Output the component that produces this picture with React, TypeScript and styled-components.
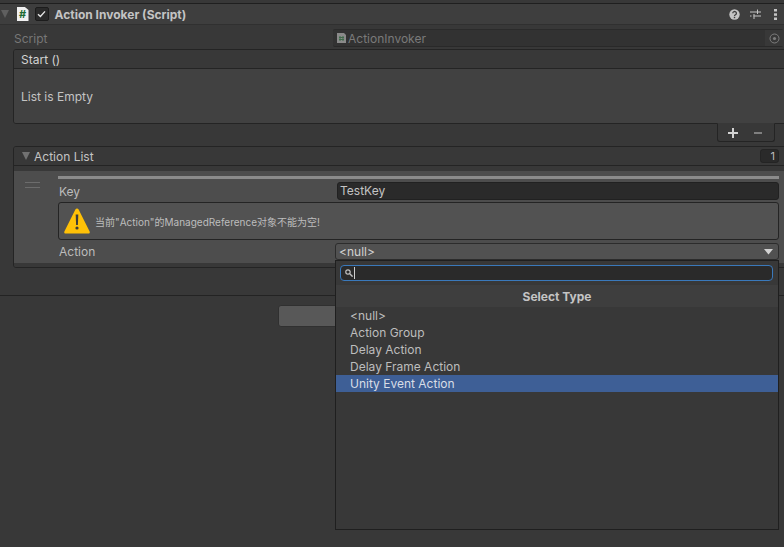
import * as React from 'react';
import styled, { createGlobalStyle } from 'styled-components';

const UI_FONT = '"Inter", "Noto Sans CJK SC", "Liberation Sans", sans-serif';

const GlobalStyle = createGlobalStyle`
  html, body {
    margin: 0;
    height: 100%;
    background: #383838;
    overflow: hidden;
  }

  #root {
    height: 100%;
  }
`;

const Page = styled.div`
  position: relative;
  width: 784px;
  height: 547px;
  padding-top: 3px;
  box-sizing: border-box;
  overflow: hidden;
  font-family: ${UI_FONT};
  font-size: 12px;
  color: #c4c4c4;
  background: #383838;
`;

const ComponentHeader = styled.div`
  display: flex;
  align-items: center;
  height: 20px;
  box-sizing: content-box;
  border-top: 1px solid #1f1f1f;
  border-bottom: 1px solid #303030;
  background: #3e3e3e;
  padding-left: 1px;
`;

const Title = styled.span`
  flex: 1;
  margin-left: 6px;
  font-weight: 700;
  color: #c4c4c4;
`;

const FoldArrow = styled.span<{ $shade: string }>`
  width: 0;
  height: 0;
  flex: none;
  border-left: 4.5px solid transparent;
  border-right: 4.5px solid transparent;
  border-top: 8px solid ${p => p.$shade};
`;

const ScriptIcon = styled.span`
  display: flex;
  align-items: center;
  justify-content: center;
  width: 12px;
  height: 14px;
  margin-left: 7.5px;
  background: #f1f1f1;
  clip-path: polygon(0 0, 70% 0, 100% 22%, 100% 100%, 0 100%);
  color: #1c6b33;
  font-size: 11px;
  font-weight: 700;
`;

const EnabledBox = styled.span`
  display: flex;
  align-items: center;
  justify-content: center;
  width: 14px;
  height: 14px;
  box-sizing: border-box;
  margin-left: 6px;
  border: 1px solid #1c1c1c;
  border-radius: 2px;
  background: #2a2a2a;
`;

const HeaderIcons = styled.div`
  display: flex;
  align-items: center;
  gap: 10px;
  margin-right: 7px;
`;

const ScriptRow = styled.div`
  display: flex;
  align-items: center;
  height: 18px;
  margin: 4px 1px 2px 14px;
  color: #777;
`;

const RowLabel = styled.span`
  width: 319px;
  flex: none;
`;

const ObjectField = styled.div`
  display: flex;
  align-items: center;
  flex: 1;
  height: 18px;
  box-sizing: border-box;
  padding-left: 4px;
  border-bottom: 1px solid #292929;
  border-top: 1px solid #2b2b2b;
  border-radius: 2px;
  background: #323232;
  color: #7a7a7a;
`;

const FieldName = styled.span`
  flex: 1;
  margin-left: 2px;
`;

const PickerButton = styled.span`
  display: flex;
  align-items: center;
  justify-content: center;
  width: 18px;
  align-self: stretch;
  background: #383838;
`;

const EventPanel = styled.section`
  margin: 0 -4px 0 13px;
`;

const EventBox = styled.div`
  border: 1px solid #242424;
  border-radius: 3px 3px 0 3px;
  overflow: hidden;
`;

const PanelHeader = styled.div`
  display: flex;
  align-items: center;
  height: 18px;
  padding-left: 7px;
  border-bottom: 1px solid #242424;
  background: #383838;
  color: #d2d2d2;
`;

const EventBody = styled.div`
  display: flex;
  align-items: center;
  height: 54px;
  padding-left: 7px;
  background: #414141;
`;

const Footer = styled.div`
  display: flex;
  align-items: center;
  gap: 16px;
  width: 58px;
  height: 19px;
  margin: -1px 13px 0 auto;
  padding-left: 10px;
  border: 1px solid #242424;
  border-top: 1px solid #383838;
  border-radius: 0 0 3px 3px;
  box-sizing: border-box;
  background: #383838;
`;

const ListPanel = styled.section`
  margin: 4px -4px 0 13px;
  border: 1px solid #242424;
  border-radius: 3px;
  overflow: hidden;
`;

const ListHeader = styled(PanelHeader)`
  padding-left: 8px;
  gap: 4px;
`;

const ListTitle = styled.span`
  flex: 1;
  color: #c4c4c4;
`;

const CountBadge = styled.span`
  width: 19px;
  height: 14px;
  margin-right: 8px;
  padding-right: 3px;
  box-sizing: border-box;
  border: 1px solid #242424;
  border-radius: 3px;
  background: #2a2a2a;
  color: #bdbdbd;
  font-size: 11px;
  line-height: 13px;
  text-align: right;
`;

const ListBody = styled.div`
  padding: 5px 0 4px;
  background: #383838;
`;

const ElementArea = styled.div`
  display: flex;
  height: 92px;
  padding: 5px 8px 0 0;
  box-sizing: border-box;
  background: #4d4d4d;
`;

const DragHandle = styled.div`
  width: 15px;
  height: 4px;
  flex: none;
  margin: 6px 18px 0 11px;
  border-top: 1px solid #6c6c6c;
  border-bottom: 1px solid #6c6c6c;
`;

const ElementColumn = styled.div`
  display: flex;
  flex-direction: column;
  flex: 1;
  min-width: 0;
`;

const ElementBar = styled.div`
  height: 3px;
  background: #8b8b8b;
`;

const FieldRow = styled.div`
  display: flex;
  align-items: center;
  height: 18px;
  margin-top: 3px;
  color: #bcbcbc;
`;

const FieldLabel = styled.span`
  width: 278px;
  margin-left: 1px;
  flex: none;
`;

const TextField = styled.div`
  flex: 1;
  height: 18px;
  box-sizing: border-box;
  padding-left: 2px;
  border: 1px solid #212121;
  border-radius: 3px;
  background: #2a2a2a;
  color: #c4c4c4;
  line-height: 16px;
`;

const HelpBox = styled.div`
  display: flex;
  align-items: center;
  height: 38px;
  box-sizing: border-box;
  margin-top: 2px;
  padding-left: 5px;
  border: 1px solid #242424;
  border-radius: 3px;
  background: #525252;
  font-size: 10px;
  color: #bdbdbd;
`;

const HelpText = styled.span`
  margin-left: 5px;
`;

const ActionRow = styled(FieldRow)`
  height: 17px;
`;

const ActionLabel = styled(FieldLabel)`
  width: 276px;
`;

const SelectField = styled.div`
  display: flex;
  align-items: center;
  justify-content: space-between;
  flex: 1;
  height: 17px;
  box-sizing: border-box;
  padding: 0 5px 0 3px;
  border: 1px solid #2c2c2c;
  border-radius: 3px;
  background: #515151;
  color: #d2d2d2;
`;

const Divider = styled.div`
  height: 1px;
  margin-top: 27px;
  background: #232323;
`;

const AddButton = styled.div`
  width: 230px;
  height: 22px;
  margin: 9px 0 0 278px;
  border: 1px solid #303030;
  border-radius: 3px;
  box-sizing: border-box;
  background: #585858;
`;

const Popup = styled.div`
  position: absolute;
  top: 260px;
  left: 335px;
  width: 444px;
  height: 270px;
  box-sizing: border-box;
  border: 1px solid #1f1f1f;
  background: #383838;
`;

const SearchBar = styled.div`
  height: 24px;
  padding: 4px 5px 0 4px;
  box-sizing: border-box;
  background: #383838;
`;

const SearchField = styled.div`
  display: flex;
  align-items: center;
  height: 16px;
  box-sizing: border-box;
  padding-left: 4px;
  border: 1px solid #3a79bb;
  border-radius: 4px;
  background: #2a2a2a;
`;

const Caret = styled.span`
  width: 1px;
  height: 12px;
  margin-left: 1px;
  background: #cfcfcf;
`;

const PopupTitle = styled.div`
  height: 22px;
  background: #3e3e3e;
  font-weight: 700;
  line-height: 23px;
  text-align: center;
  color: #c4c4c4;
`;

const TypeList = styled.div`
  display: flex;
  flex-direction: column;
`;

const TypeItem = styled.div<{ $active?: boolean }>`
  height: 17px;
  padding-left: 14px;
  line-height: 17px;
  color: ${p => (p.$active ? '#d8dde6' : '#bdbdbd')};
  background: ${p => (p.$active ? '#3e5f96' : 'transparent')};
`;

const HelpGlyph = () => (
  <svg width="11" height="11" viewBox="0 0 11 11">
    <circle cx="5.5" cy="5.5" r="5.2" fill="#c4c4c4" />
    <path d="M3.8 4.2a1.8 1.7 0 1 1 2.7 1.5c-.7.4-1 .7-1 1.3" fill="none" stroke="#3e3e3e" strokeWidth="1.3" />
    <rect x="4.8" y="7.8" width="1.4" height="1.4" fill="#3e3e3e" />
  </svg>
);

const PresetGlyph = () => (
  <svg width="11" height="10" viewBox="0 0 11 10">
    <path d="M0 3h11M7.5 0.5v4.5M0 7h1.5M3.5 7h7.5M4 5v5" stroke="#c4c4c4" strokeWidth="1" fill="none" />
  </svg>
);

const MoreGlyph = () => (
  <svg width="6" height="11" viewBox="-3 0 6 11">
    <rect x="0" y="0" width="3" height="2.5" fill="#c4c4c4" />
    <rect x="0" y="4.3" width="3" height="2.5" fill="#c4c4c4" />
    <rect x="0" y="8.5" width="3" height="2.5" fill="#c4c4c4" />
  </svg>
);

const CheckGlyph = () => (
  <svg width="9" height="8" viewBox="0 0 9 8">
    <path d="M1 4.2 3.4 6.4 8 1.4" fill="none" stroke="#e6e6e6" strokeWidth="1.4" />
  </svg>
);

const FileGlyph = () => (
  <svg width="9" height="10" viewBox="0 0 9 10">
    <path d="M0 0h7l2 2v8H0z" fill="#8a8a8a" />
    <path d="M3 3v5M6 3v5M2 4.5h5M2 6.5h5" stroke="#3f6b4a" strokeWidth="1" />
  </svg>
);

const TargetGlyph = () => (
  <svg width="11" height="11" viewBox="0 0 11 11">
    <circle cx="5.5" cy="5.5" r="4.5" fill="none" stroke="#7d7d7d" strokeWidth="1" />
    <circle cx="5.5" cy="5.5" r="1.6" fill="#7d7d7d" />
  </svg>
);

const PlusGlyph = () => (
  <svg width="10" height="10" viewBox="0 0 10 10">
    <path d="M5 0v10M0 5h10" stroke="#d2d2d2" strokeWidth="2" />
  </svg>
);

const MinusGlyph = () => (
  <svg width="8" height="2" viewBox="0 0 8 2">
    <rect width="8" height="2" fill="#7f7f7f" />
  </svg>
);

const WarningGlyph = () => (
  <svg width="26" height="26" viewBox="0 0 26 26">
    <path d="M13 0.5c.7 0 1.2.4 1.6 1l11 22c.5 1 0 2-1.2 2H1.6c-1.2 0-1.7-1-1.2-2l11-22c.4-.6.9-1 1.6-1z" fill="#ffc107" />
    <path d="M11.7 6.5h2.6l-.4 10.5h-1.8z" fill="#3a3a3a" />
    <circle cx="13" cy="20" r="1.6" fill="#3a3a3a" />
  </svg>
);

const SearchGlyph = () => (
  <svg width="8" height="8" viewBox="0 0 8 8">
    <circle cx="3" cy="3" r="2.2" fill="none" stroke="#c4c4c4" strokeWidth="1.2" />
    <path d="M4.8 4.8 7.6 7.6" stroke="#c4c4c4" strokeWidth="1.4" />
  </svg>
);

const DropGlyph = () => (
  <svg width="9" height="6" viewBox="0 0 9 6">
    <path d="M0 0h9L4.5 5.5z" fill="#d2d2d2" />
  </svg>
);

const typeNames = ['<null>', 'Action Group', 'Delay Action', 'Delay Frame Action', 'Unity Event Action'];

export default function App() {
  return (
    <Page>
      <GlobalStyle />
      <ComponentHeader>
        <FoldArrow $shade="#5f5f5f" />
        <ScriptIcon>#</ScriptIcon>
        <EnabledBox>
          <CheckGlyph />
        </EnabledBox>
        <Title>Action Invoker (Script)</Title>
        <HeaderIcons>
          <HelpGlyph />
          <PresetGlyph />
          <MoreGlyph />
        </HeaderIcons>
      </ComponentHeader>

      <ScriptRow>
        <RowLabel>Script</RowLabel>
        <ObjectField>
          <FileGlyph />
          <FieldName>ActionInvoker</FieldName>
          <PickerButton>
            <TargetGlyph />
          </PickerButton>
        </ObjectField>
      </ScriptRow>

      <EventPanel>
        <EventBox>
          <PanelHeader>Start ()</PanelHeader>
          <EventBody>List is Empty</EventBody>
        </EventBox>
        <Footer>
          <PlusGlyph />
          <MinusGlyph />
        </Footer>
      </EventPanel>

      <ListPanel>
        <ListHeader>
          <FoldArrow $shade="#727272" />
          <ListTitle>Action List</ListTitle>
          <CountBadge>1</CountBadge>
        </ListHeader>
        <ListBody>
          <ElementArea>
            <DragHandle />
            <ElementColumn>
              <ElementBar />
              <FieldRow>
                <FieldLabel>Key</FieldLabel>
                <TextField>TestKey</TextField>
              </FieldRow>
              <HelpBox>
                <WarningGlyph />
                <HelpText>当前"Action"的ManagedReference对象不能为空!</HelpText>
              </HelpBox>
              <ActionRow>
                <ActionLabel>Action</ActionLabel>
                <SelectField>
                  &lt;null&gt;
                  <DropGlyph />
                </SelectField>
              </ActionRow>
            </ElementColumn>
          </ElementArea>
        </ListBody>
      </ListPanel>

      <Divider />
      <AddButton />

      <Popup>
        <SearchBar>
          <SearchField>
            <SearchGlyph />
            <Caret />
          </SearchField>
        </SearchBar>
        <PopupTitle>Select Type</PopupTitle>
        <TypeList>
          {typeNames.map(name => (
            <TypeItem key={name} $active={name === 'Unity Event Action'}>
              {name}
            </TypeItem>
          ))}
        </TypeList>
      </Popup>
    </Page>
  );
}
